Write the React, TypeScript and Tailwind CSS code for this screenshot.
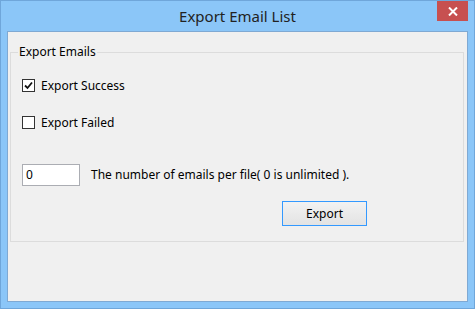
import React from "react";

export default function App() {
  const font = { fontFamily: '"Noto Sans", "Open Sans", sans-serif' };
  return (
    <div
      className="w-[475px] h-[309px] bg-[#8bc6f8] border border-[#6fa6da] flex flex-col text-[12px] text-black overflow-hidden"
      style={font}
    >
      <div className="h-[30px] flex items-start relative shrink-0">
        <div className="flex-1 text-center text-[15px] leading-[15px] pt-[8px] text-[#222]">Export Email List</div>
        <div className="absolute right-[6px] top-0 w-[31px] h-[20px] bg-[#c75050] flex items-center justify-center">
          <svg width="10" height="9" viewBox="0 0 10 9">
            <path d="M1 0.5 L9 8.5 M9 0.5 L1 8.5" stroke="white" strokeWidth="2" />
          </svg>
        </div>
      </div>
      <div className="flex-1 mx-[6px] mb-[6px] border border-[#7fa9d3] bg-[#f0f0f0] pl-[1px] pr-[3px] pt-[20px]">
        <div className="relative border border-[#dcdcdc] h-[190px] ml-[1px]">
          <div className="absolute left-[7px] top-[-9px] bg-[#f0f0f0] px-[1px] leading-[16px]">Export Emails</div>
          <div className="pl-[11px] pt-[26px] flex flex-col gap-[24px]">
            <label className="flex items-center gap-[6px] h-[13px]">
              <span className="w-[13px] h-[13px] border border-[#333] bg-white flex items-center justify-center">
                <svg width="9" height="9" viewBox="0 0 9 9">
                  <path d="M1 4.5 L3.5 7 L8 1.5" stroke="#111" strokeWidth="1.8" fill="none" />
                </svg>
              </span>
              <span className="leading-[13px]">Export Success</span>
            </label>
            <label className="flex items-center gap-[6px] h-[13px]">
              <span className="w-[13px] h-[13px] border border-[#333] bg-white" />
              <span className="leading-[13px]">Export Failed</span>
            </label>
          </div>
          <div className="pl-[11px] pt-[35px] flex items-center">
            <div className="w-[58px] h-[22px] border border-[#abadb3] bg-white pl-[3px] flex items-center">0</div>
            <span className="ml-[11px]">The number of emails per file( 0 is unlimited ).</span>
          </div>
          <div className="flex pl-[271px] pt-[15px]">
            <button className="w-[85px] h-[25px] border border-[#3399ff] bg-gradient-to-b from-[#f2f2f2] to-[#e3e3e3] text-[12px] leading-none">
              Export
            </button>
          </div>
        </div>
      </div>
    </div>
  );
}
